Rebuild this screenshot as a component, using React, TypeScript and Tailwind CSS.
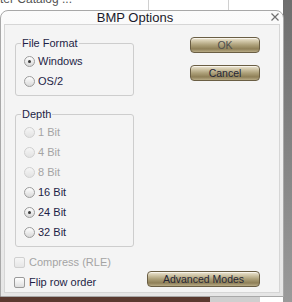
import React from "react";

const font = { fontFamily: '"Liberation Sans", Arial, sans-serif' };

function Radio({ label, checked, disabled }: { label: string; checked?: boolean; disabled?: boolean }) {
  return (
    <div className="flex h-[20px] items-center gap-[3px]">
      <span
        className={
          disabled
            ? "flex h-[11px] w-[11px] items-center justify-center rounded-full border border-[#d0d0d0] bg-gradient-to-b from-[#f6f6f6] to-[#e2e2e2]"
            : "flex h-[11px] w-[11px] items-center justify-center rounded-full border border-[#9c9c9c] bg-gradient-to-b from-[#ffffff] to-[#d8d8d8]"
        }
      >
        {checked && <span className="h-[3px] w-[3px] rounded-full bg-[#3a3a3a]" />}
      </span>
      <span className={disabled ? "text-[#a4a4a4]" : "text-[#1e1e46]"}>{label}</span>
    </div>
  );
}

function Check({ label, disabled }: { label: string; disabled?: boolean }) {
  return (
    <div className="-ml-[1px] flex h-[20px] items-center gap-[4px]">
      <span
        className={
          disabled
            ? "h-[11px] w-[11px] rounded-[2px] border border-[#d0d0d0] bg-gradient-to-b from-[#f6f6f6] to-[#e6e6e6]"
            : "h-[11px] w-[11px] rounded-[2px] border border-[#9a9a9a] bg-gradient-to-b from-[#ffffff] to-[#dedede]"
        }
      />
      <span className={disabled ? "text-[#a4a4a4]" : "text-[#1e1e46]"}>{label}</span>
    </div>
  );
}

function Btn({ label, w, dim }: { label: string; w: string; dim?: boolean }) {
  return (
    <div
      className={`flex h-[16px] items-center justify-center rounded-[4px] border border-[#6a5e44] bg-[linear-gradient(to_bottom,#eee8d8_0%,#d2c8aa_22%,#ada079_50%,#8e7f57_78%,#b8ab86_100%)] text-[10.5px] leading-none shadow-[inset_0_1px_0_#f8f4ea] ${w} ${dim ? "text-[#4e4e4e]" : "text-[#262636]"}`}
    >
      {label}
    </div>
  );
}

export default function App() {
  return (
    <div className="relative h-[302px] w-[292px] overflow-hidden bg-white text-[11px]" style={font}>
      {/* background behind the dialog */}
      <div className="absolute left-0 top-[-10px] whitespace-nowrap text-[12px] text-[#555]">ter Catalog ...</div>
      <div className="absolute left-[148px] top-0 h-[10px] w-px bg-[#d0d0d0]" />
      <div className="absolute left-[228px] top-0 h-[10px] w-px bg-[#d0d0d0]" />
      <div className="absolute right-0 top-0 h-full w-[9px] bg-gradient-to-b from-[#6e6e6e] to-[#9a9a9a]" />
      <div className="absolute bottom-0 left-0 h-[6px] w-[210px] bg-[#5a3a30]" />
      <div className="absolute bottom-0 left-[210px] h-[6px] w-[50px] bg-[#cfcfcf]" />

      {/* dialog window */}
      <div className="absolute left-0 top-[10px] flex h-[287px] w-[284px] flex-col rounded-t-[8px] border border-[#a8a8a8] bg-gradient-to-b from-[#fbfbfb] to-[#e6e6e6] px-[3px] pb-[3px]">
        <div className="relative flex h-[16px] items-center justify-center pr-[14px]">
          <span className="text-[13px] leading-none text-[#1a1a2a]">BMP Options</span>
          <svg className="absolute right-0 top-[1px]" width="10" height="10" viewBox="0 0 10 10">
            <path d="M1.5 1.5 L8.5 8.5 M8.5 1.5 L1.5 8.5" stroke="#707070" strokeWidth="1.2" />
          </svg>
        </div>
        <div className="flex flex-1 border border-[#d6d6d6] bg-[#f4f4f4]">
          <div className="flex w-[129px] flex-col pl-[10px]">
            <fieldset className="mt-[12px] rounded-[3px] border border-[#cdcdcd] pb-[4px] pl-[8px] pr-2 pt-[1px]">
              <legend className="-ml-[3px] px-[1px] leading-[13px] text-[#1e1e46]">File Format</legend>
              <Radio label="Windows" checked />
              <Radio label="OS/2" />
            </fieldset>
            <fieldset className="mt-[12px] rounded-[3px] border border-[#cdcdcd] pb-[4px] pl-[8px] pr-2 pt-[1px]">
              <legend className="-ml-[3px] px-[1px] leading-[13px] text-[#1e1e46]">Depth</legend>
              <Radio label="1 Bit" disabled />
              <Radio label="4 Bit" disabled />
              <Radio label="8 Bit" disabled />
              <Radio label="16 Bit" />
              <Radio label="24 Bit" checked />
              <Radio label="32 Bit" />
            </fieldset>
            <div className="mt-[5px]">
              <Check label="Compress (RLE)" disabled />
              <Check label="Flip row order" />
            </div>
          </div>
          <div className="flex flex-1 flex-col items-end pb-[5px] pr-[19px] pt-[12px]">
            <Btn label="OK" w="w-[70px]" dim />
            <div className="mt-[12px]">
              <Btn label="Cancel" w="w-[70px]" />
            </div>
            <div className="mt-auto">
              <Btn label="Advanced Modes" w="w-[113px]" />
            </div>
          </div>
        </div>
      </div>
    </div>
  );
}
